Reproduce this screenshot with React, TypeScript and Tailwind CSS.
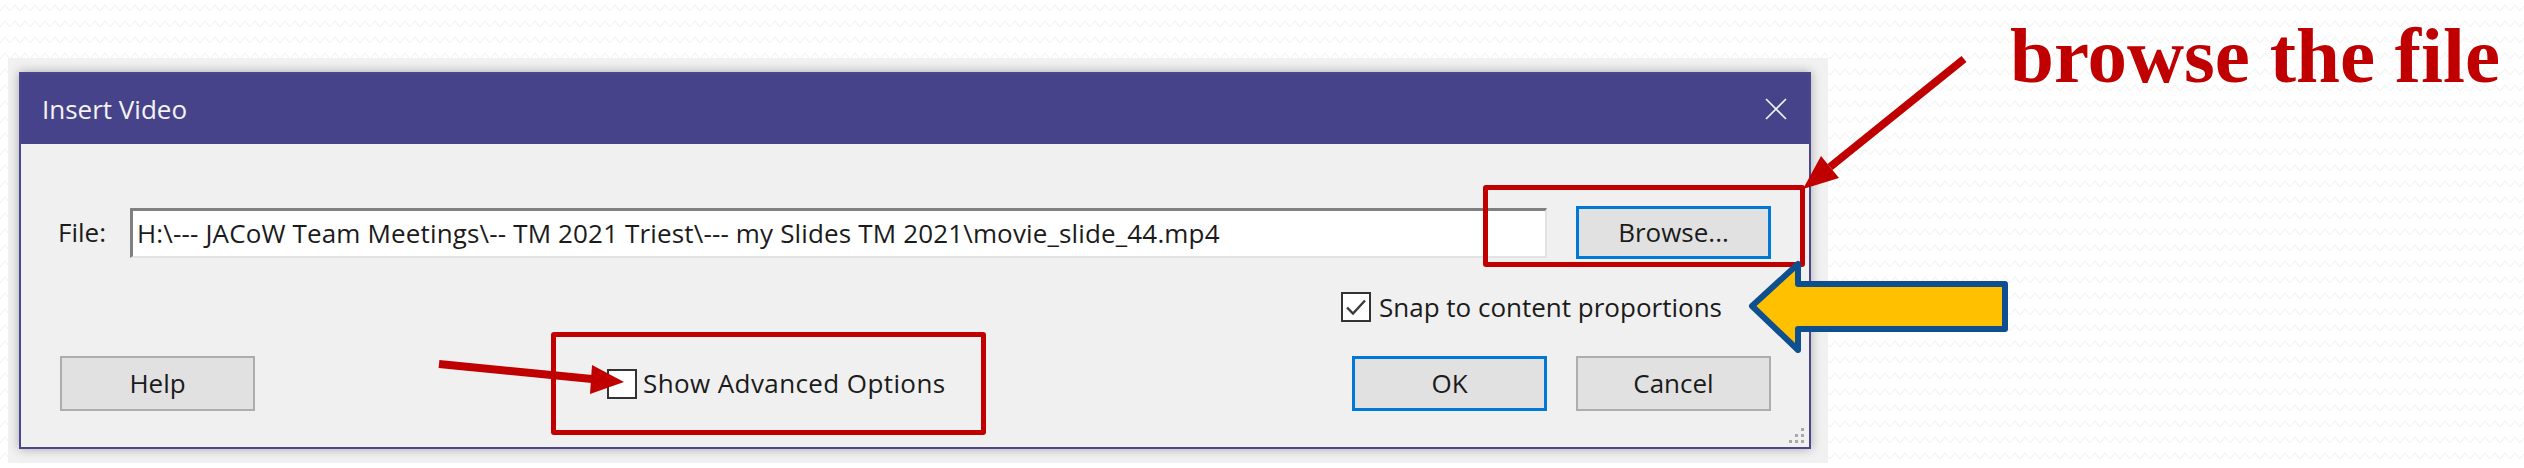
import React from "react";

const ui = "font-['Open_Sans','Noto_Sans',sans-serif] text-[26px] text-[#1b1b1b]";

function CheckBox({ checked }: { checked?: boolean }) {
  return (
    <div className="w-[30px] h-[30px] shrink-0 border-2 border-[#333333] bg-white flex items-center justify-center">
      {checked && (
        <svg width="24" height="24" viewBox="0 0 24 24">
          <path d="M3 12.5 L9 18.5 L21 5.5" fill="none" stroke="#3a3a3a" strokeWidth="2.4" />
        </svg>
      )}
    </div>
  );
}

function Button({ label, focused }: { label: string; focused?: boolean }) {
  return (
    <div
      className={
        focused
          ? "w-[195px] h-full flex items-center justify-center bg-[#e1e1e1] border-[3px] border-[#0078d7]"
          : "w-[195px] h-full flex items-center justify-center bg-[#e1e1e1] border-2 border-[#adadad]"
      }
    >
      {label}
    </div>
  );
}

function Background() {
  return (
    <svg className="absolute inset-0 -z-10" width="2524" height="468">
      <defs>
        <pattern id="zig" width="10" height="16" patternUnits="userSpaceOnUse">
          <path d="M0 11 L5 5 L10 11" fill="none" stroke="#f2f2f2" strokeWidth="1.1" />
        </pattern>
      </defs>
      <rect width="2524" height="468" fill="url(#zig)" />
    </svg>
  );
}

function Annotations() {
  return (
    <svg className="absolute inset-0 pointer-events-none" width="2524" height="468">
      {/* arrow to browse box */}
      <line x1="1964" y1="59" x2="1830" y2="167" stroke="#c00000" strokeWidth="8" />
      <polygon points="1803,189 1839,178 1821,156" fill="#c00000" />
      {/* arrow to advanced options */}
      <line x1="439" y1="364" x2="592" y2="379" stroke="#c00000" strokeWidth="8" />
      <polygon points="624,382 590,394 592,365" fill="#c00000" />
      {/* yellow block arrow */}
      <polygon
        points="1752,306 1798,264 1798,284 2005,284 2005,329 1798,329 1798,350"
        fill="#ffc000"
        stroke="#0d4f8f"
        strokeWidth="6"
        strokeLinejoin="round"
      />
    </svg>
  );
}

export default function App() {
  return (
    <div className="relative isolate w-[2524px] h-[468px] overflow-hidden bg-white flex items-start">
      <Background />

      <div className="ml-[8px] mt-[58px] w-[1820px] h-[405px] bg-[#f1f1f1] pl-[11px] pt-[14px]">
        <div className={`relative w-[1792px] h-[377px] flex flex-col border-2 border-[#4a478f] bg-[#f0f0f0] shadow-[0_0_10px_rgba(0,0,0,0.3)] ${ui}`}>
          <div className="h-[70px] shrink-0 bg-[#46438b] flex items-center justify-between pl-[21px] pr-[21px] text-[#f4f4f4]">
            <span>Insert Video</span>
            <svg width="24" height="24" viewBox="0 0 24 24">
              <path d="M2 2 L22 22 M22 2 L2 22" stroke="#f4f4f4" strokeWidth="1.6" />
            </svg>
          </div>

          <div className="flex-1 flex flex-col pl-[39px] pr-[38px] pt-[62px]">
            <div className="flex items-center h-[53px]">
              <div className="w-[70px] -ml-[2px] mr-[2px]">File:</div>
              <div className="w-[1417px] h-[50px] bg-white border-t-[3px] border-l-[3px] border-[#808080] border-b-2 border-r-2 border-b-[#e3e3e3] border-r-[#e3e3e3] flex items-center pl-[4px] whitespace-nowrap overflow-hidden tracking-[0.15px]">
                H:\--- JACoW Team Meetings\-- TM 2021 Triest\--- my Slides TM 2021\movie_slide_44.mp4
              </div>
              <div className="ml-[29px] h-full">
                <Button label="Browse..." focused />
              </div>
            </div>

            <div className="mt-[32px] h-[32px] flex items-center justify-end gap-[8px] pr-[49px]">
              <CheckBox checked />
              <span>Snap to content proportions</span>
            </div>

            <div className="mt-[33px] h-[55px] flex items-center">
              <Button label="Help" />
              <div className="ml-[296px] w-[435px] h-[103px] shrink-0 border-[5px] border-[#c00000] rounded-[3px] flex items-center gap-[6px] pl-[51px]">
                <CheckBox />
                <span className="tracking-[0.4px]">Show Advanced Options</span>
              </div>
              <div className="ml-auto h-full">
                <Button label="OK" focused />
              </div>
              <div className="ml-[29px] h-full">
                <Button label="Cancel" />
              </div>
            </div>
          </div>

          <svg className="absolute right-[4px] bottom-[3px]" width="20" height="20" viewBox="0 0 20 20">
            <rect x="16" y="4" width="3" height="3" fill="#a8a8a8" />
            <rect x="16" y="10" width="3" height="3" fill="#a8a8a8" />
            <rect x="16" y="16" width="3" height="3" fill="#a8a8a8" />
            <rect x="10" y="10" width="3" height="3" fill="#a8a8a8" />
            <rect x="10" y="16" width="3" height="3" fill="#a8a8a8" />
            <rect x="4" y="16" width="3" height="3" fill="#a8a8a8" />
          </svg>
        </div>
      </div>

      <div className="ml-[182px] mt-[16px] font-['Liberation_Serif',serif] font-bold text-[79px] leading-none text-[#c00000] whitespace-nowrap">
        browse the file
      </div>

      <div className="absolute left-[1483px] top-[185px] w-[322px] h-[82px] border-[5px] border-[#c00000] rounded-[3px]" />

      <Annotations />
    </div>
  );
}
